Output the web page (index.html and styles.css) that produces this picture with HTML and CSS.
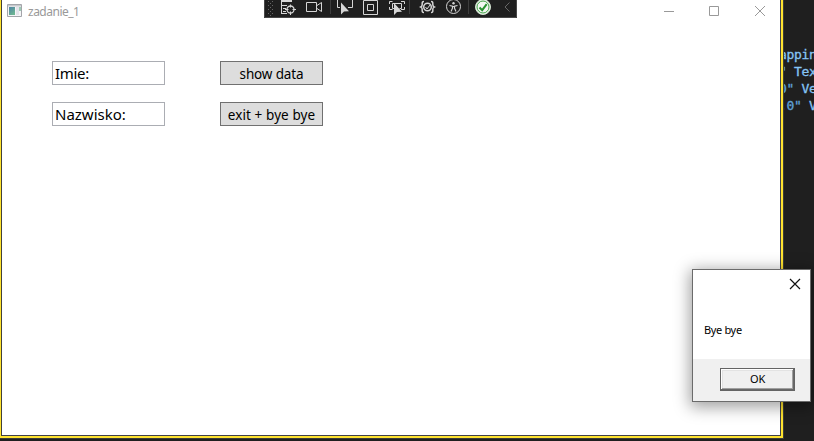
FILE: index.html
```html
<!DOCTYPE html>
<html lang="pl">
<head>
<meta charset="utf-8">
<title>zadanie_1</title>
<link rel="stylesheet" href="styles.css">
</head>
<body>
<div class="desktop">
  <main class="window">
    <header class="titlebar">
      <svg class="app-icon" width="16" height="15" viewBox="0 0 16 15">
        <defs><linearGradient id="pane" x2="0.6" y2="1"><stop stop-color="#4d82a5"/><stop offset="1" stop-color="#6db592"/></linearGradient></defs>
        <path d="M.5.5h14v12H.5z" fill="#f5f5f7" stroke="#a3a5aa"/>
        <path d="M1 1h13v1.500H1z" fill="#c6c8cc"/>
        <path d="M2 3h6v8H2z" fill="url(#pane)"/>
        <path d="M9 3h3v8H9z" fill="#e3e3ea"/>
        <path d="M12 3h2v4h-2z" fill="#9ccbb4"/>
      </svg>
      <h1 class="title">zadanie_1</h1>
      <svg class="controls" width="102" height="12" viewBox="0 0 102 12" fill="none" stroke="#999">
        <path d="M0 5.500h10M45.500.5h9v9h-9z"/>
        <path d="M91 0l10 10M101 0l-10 10"/>
      </svg>
    </header>
    <div class="form">
      <div class="field"><span class="t-imie">Imie:</span></div>
      <button class="btn"><span class="t-show">show data</span></button>
      <div class="field"><span class="t-nazw">Nazwisko:</span></div>
      <button class="btn"><span class="t-exit">exit + bye bye</span></button>
    </div>
  </main>
  <aside class="code"><pre>appin
<i>"</i> Tex
<i>0"</i> Ve
<i>.0"</i> V</pre></aside>
</div>

<div class="debugbar">
  <svg width="253" height="18" viewBox="0 0 253 18" fill="none" stroke="#d6d6d6">
    <path d="M0 0h253v18H0z" fill="#1f1f1f" stroke="none"/>
    <path d="M.5 0v17.500h252V0" stroke="#484848"/>
    <g stroke="#666" stroke-dasharray="1 3"><path d="M4.500 1v15M8.500 1v15"/><path d="M6.500 3v13"/></g>
    <path d="M17 0h11v2H17z" fill="#d6d6d6" stroke="none"/>
    <path d="M17.500 0v14M17 5.500h6M19 8.500h3M19 11.500h3M17 13.500h6"/>
    <circle cx="26.500" cy="9.500" r="3.500" stroke-width="1.300"/>
    <path d="M26.500 4.500v3M26.500 11.500v3.500M21 9.500h3.500M28.500 9.500h3.500"/>
    <path d="M42.500 2.500h10v9h-10zM53 5.500l4.500-3v9l-4.500-3"/>
    <path d="M66.500 0v14M145.500 0v14M204.500 0v14" stroke="#3d3d3d"/>
    <path d="M76 7.500h-2.500V0M88.500 0v7.500H84"/>
    <path d="M77 2.500v12l3-3 5-.3z" fill="#d6d6d6" stroke="none"/>
    <path d="M99.500.5h14v14h-14zM103.500 4.500h6v6h-6z"/>
    <path d="M125.500 4V1.500h3M137 1.500h3.500V4M125.500 7v2.500h3M140.500 7v2.500H137M128.500 3.500h9v5h-2M128.500 3.500v5h2"/>
    <path d="M130 3v12l3-3 5-.3z" fill="#d6d6d6" stroke="none"/>
    <path d="M160 1.500c-2 0-1.800 1-1.800 3s-.5 2-1.500 2.500c1 .5 1.500.5 1.500 2.500s-.3 3 1.800 3M167 1.500c2 0 1.800 1 1.800 3s.5 2 1.500 2.500c-1 .5-1.500.5-1.500 2.500s.3 3-1.800 3" stroke-width="1.500"/>
    <circle cx="163.500" cy="7" r="3.800" stroke-width="1.500"/><path d="M161.500 7l1.500 2 3-4"/>
    <circle cx="189.500" cy="6.500" r="7"/>
    <circle cx="189.500" cy="3.200" r="1.200" fill="#d6d6d6" stroke="none"/>
    <path d="M185.500 5.500l3 .7v2l-1.500 3.300M193.500 5.500l-3 .7v2l1.500 3.300M188.500 6.500h2" stroke-width="1.200"/>
    <circle cx="219" cy="7" r="7.500" fill="#f2f7f1" stroke="#d5e5d3"/>
    <circle cx="219" cy="7" r="6" stroke="#41a246"/>
    <path d="M215.500 7.500l2.700 2.700 4.500-6" stroke="#27912f" stroke-width="2"/>
    <path d="M245.500 2.500l-4.500 4.500 4.500 4.500" stroke="#666"/>
  </svg>
</div>

<div class="dialog" role="dialog">
  <div class="dialog-body">
    <svg class="dialog-close" width="12" height="12" viewBox="0 0 12 12"><path d="M1 1l10 10M11 1L1 11" stroke="#111" stroke-width="1.200"/></svg>
    <p class="message"><span class="t-bye">Bye bye</span></p>
  </div>
  <div class="dialog-footer"><button class="ok">OK</button></div>
</div>
</body>
</html>
```
FILE: styles.css
```css
* { box-sizing: border-box; }
body { margin: 0; width: 814px; height: 441px; overflow: hidden; background: #1f1f1f; font-family: "Noto Sans", "Open Sans", sans-serif; }
.desktop { display: flex; height: 439px; }
.window { width: 784px; height: 439px; flex: none; background: #fff; border-style: solid; border-color: #3c3c37; border-width: 0 1px 1px 0; box-shadow: inset 1px 0 #ffe32f, inset -2px -2px #ffe32f, inset 2px 0 #41413a, inset -3px -3px #41414a; }
.titlebar { display: flex; height: 24px; padding: 4px 17px 0 7px; }
.app-icon { flex: none; }
.title { margin: -1px 0 0 5px; font-size: 12px; line-height: 17px; font-weight: 400; color: #999; letter-spacing: -.5px; }
.controls { margin: 2px 0 0 auto; }
.form { display: grid; grid-template-columns: 113px 103px; grid-auto-rows: 24px; gap: 17px 55px; padding: 37px 0 0 52px; }
.field { border: 1px solid #abadb3; padding-left: 2px; font-size: 15px; line-height: 22px; color: #000; white-space: nowrap; }
.t-imie { letter-spacing: -.3px; }
.btn { display: flex; align-items: center; justify-content: center; border: 1px solid #707070; background: #ddd; padding: 2px 0 0; font: 13.500px/20px "Noto Sans", sans-serif; color: #000; white-space: nowrap; }
.t-show { letter-spacing: -.15px; }
.t-exit { letter-spacing: .1px; }
.code { flex: 1; overflow: hidden; background: #1f1f1f; padding-top: 46px; }
.code pre { margin: 0 0 0 -5px; font: 13px/17px "DejaVu Sans Mono", monospace; color: #86c5f5; letter-spacing: -.3px; -webkit-text-stroke: .3px; }
.code i { font-style: normal; color: #5ea2d8; }
.debugbar { position: absolute; left: 264px; top: 0; height: 18px; }
.debugbar svg { display: block; }
.dialog { position: absolute; left: 692px; top: 269px; width: 119px; height: 133px; border: 1px solid #6b6b6b; background: #fff; box-shadow: 0 3px 15px 2px rgba(0,0,0,.38); }
.dialog-body { height: 89px; display: flex; flex-direction: column; }
.dialog-close { align-self: flex-end; margin: 8px 9px 0 0; flex: none; }
.message { margin: 32px 0 0 11px; font-size: 11px; line-height: 16px; color: #000; }
.t-bye { letter-spacing: -.35px; }
.dialog-footer { height: 42px; background: #f0f0f0; display: flex; justify-content: flex-end; padding: 9px 15px 0 0; }
.ok { width: 75px; height: 23px; border: 1px solid #646464; padding: 0 0 2px; background: #f0f0f0; box-shadow: inset -1px -1px #696969, inset 1px 1px #fff, inset -2px -2px #a0a0a0, inset 2px 2px #e3e3e3; font: 11px/19px "Noto Sans", sans-serif; letter-spacing: -.3px; color: #000; }
```
